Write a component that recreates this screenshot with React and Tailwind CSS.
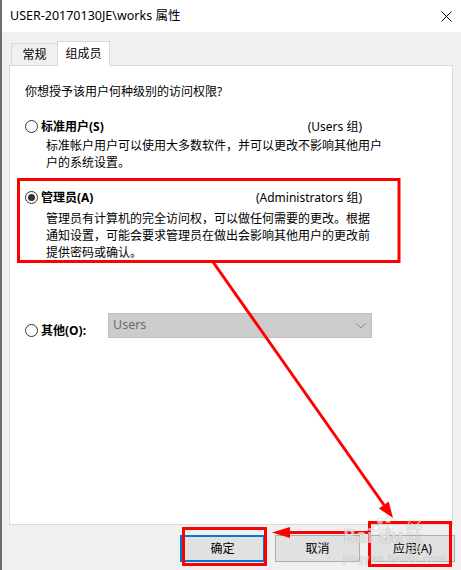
import React from 'react';

const FONT = "font-['Noto_Sans','Noto_Sans_CJK_SC',sans-serif]";

// Windows 10 style radio button
const Radio = ({ checked }) => (
  <span className="w-[13px] h-[13px] rounded-full border border-[#333] bg-white flex items-center justify-center shrink-0">
    {checked && <span className="w-[7px] h-[7px] rounded-full bg-[#333]" />}
  </span>
);

const Button = ({ label, primary }) => (
  <button
    className={`w-[85px] h-[27px] text-[12px] text-black bg-[#e1e1e1] flex items-center justify-center ${
      primary ? 'border-2 border-[#0078d7]' : 'border border-[#adadad]'
    }`}
  >
    {label}
  </button>
);

export default function App() {
  return (
    <div className={`relative w-[461px] h-[570px] overflow-hidden flex ${FONT}`}>
      {/* window edge behind the dialog */}
      <div className="w-[2px] h-full bg-[#6e6e6e]" />

      <div className="flex-1 flex flex-col bg-[#f0f0f0]">
        {/* Title bar */}
        <div className="h-[32px] bg-white flex items-center justify-between pl-[8px] pr-[8px]">
          <span className="text-[12.5px] text-black">USER-20170130JE\works 属性</span>
          <svg width="11" height="11" viewBox="0 0 11 11" className="mr-[1px]">
            <path d="M0.5 0.5 L10.5 10.5 M10.5 0.5 L0.5 10.5" stroke="#000" strokeWidth="1" />
          </svg>
        </div>

        {/* Tabs */}
        <div className="mt-[9px] ml-[9px] flex items-end h-[24px]">
          <div className="w-[46px] h-[22px] border-l border-t border-[#d9d9d9] bg-[#f0f0f0] flex items-center justify-center text-[12px] text-black">
            常规
          </div>
          <div className="relative z-10 -mb-px w-[53px] h-[25px] border-l border-t border-r border-[#d9d9d9] bg-white flex items-center justify-center text-[12px] text-black">
            组成员
          </div>
        </div>

        {/* Tab panel */}
        <div className="ml-[7px] w-[444px] h-[460px] border border-[#d9d9d9] bg-white pl-[15px] pt-[17px] text-[12px] text-black">
          <p className="leading-[17px]">你想授予该用户何种级别的访问权限?</p>

          {/* Standard user */}
          <div className="mt-[18px] w-[337px]">
            <div className="flex items-center h-[17px]">
              <Radio />
              <span className="ml-[3px] font-bold">标准用户(S)</span>
              <span className="ml-auto">(Users 组)</span>
            </div>
            <p className="mt-[2px] ml-[21px] leading-[17px] whitespace-nowrap">
              标准帐户用户可以使用大多数软件，并可以更改不影响其他用户
              <br />
              户的系统设置。
            </p>
          </div>

          {/* Administrator */}
          <div className="mt-[18px] w-[337px]">
            <div className="flex items-center h-[17px]">
              <Radio checked />
              <span className="ml-[3px] font-bold">管理员(A)</span>
              <span className="ml-auto">(Administrators 组)</span>
            </div>
            <p className="mt-[4px] ml-[21px] leading-[17px] whitespace-nowrap">
              管理员有计算机的完全访问权，可以做任何需要的更改。根据
              <br />
              通知设置，可能会要求管理员在做出会影响其他用户的更改前
              <br />
              提供密码或确认。
            </p>
          </div>

          {/* Other */}
          <div className="mt-[52px] flex items-start">
            <div className="w-[83px] h-[17px] mt-[9px] flex items-center">
              <Radio />
              <span className="ml-[3px] font-bold">其他(O):</span>
            </div>
            <div className="w-[264px] h-[25px] bg-[#cccccc] border border-[#bfbfbf] flex items-center justify-between pl-[4px] pr-[5px]">
              <span className="text-[12.5px] text-[#6d6d6d]">Users</span>
              <svg width="10" height="6" viewBox="0 0 10 6">
                <polyline points="0.5,0.5 5,5 9.5,0.5" fill="none" stroke="#8a8a8a" strokeWidth="1" />
              </svg>
            </div>
          </div>
        </div>

        {/* Dialog buttons */}
        <div className="mt-[10px] flex justify-end gap-[10px] pr-[6px]">
          <Button label="确定" primary />
          <Button label="取消" />
          <Button label="应用(A)" />
        </div>
      </div>

      {/* Red annotations */}
      <svg className="absolute inset-0 pointer-events-none" width="461" height="570" viewBox="0 0 461 570">
        <rect x="18.5" y="179.5" width="380.5" height="82" fill="none" stroke="#ff0000" strokeWidth="3" />
        <rect x="183.5" y="528.5" width="82" height="36" fill="none" stroke="#ff0000" strokeWidth="3" />
        <rect x="369.5" y="522.5" width="81" height="43" fill="none" stroke="#ff0000" strokeWidth="3" />
        <line x1="213" y1="262" x2="384" y2="505" stroke="#ff0000" strokeWidth="3" />
        <polygon points="393,518 378.9,508.4 388.7,501.4" fill="#ff0000" />
        <line x1="368" y1="532.5" x2="288" y2="532.5" stroke="#ff0000" strokeWidth="3" />
        <polygon points="272,532.5 290,527 290,538" fill="#ff0000" />
        {/* paw of the watermark */}
        <g fill="rgba(255,255,255,0.6)" stroke="rgba(150,150,150,0.35)" strokeWidth="0.8">
          <circle cx="380" cy="521" r="3" />
          <circle cx="388" cy="520" r="3" />
          <circle cx="376" cy="528" r="3" />
          <circle cx="391" cy="527" r="3" />
          <ellipse cx="384" cy="534" rx="5" ry="4" />
        </g>
      </svg>

      {/* Baidu watermark */}
      <div className="absolute left-[343px] top-[525px] w-[92px] pointer-events-none text-white/70 [text-shadow:0_0_1px_rgba(0,0,0,0.35)]">
        <div className="h-[22px] flex items-center text-[19px] font-bold leading-none">
          <span>Bai</span>
          <span className="ml-[6px]">du</span>
          <span className="ml-[3px] text-[17px] font-normal">经验</span>
        </div>
        <div className="mt-[5px] h-[13px] text-[10px] leading-[13px] tracking-[1px]">jingyan.baidu.com</div>
      </div>
    </div>
  );
}
